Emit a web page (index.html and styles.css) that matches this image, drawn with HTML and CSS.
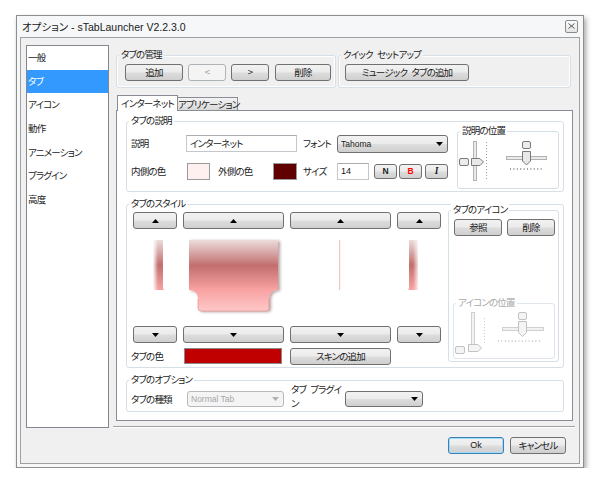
FILE: index.html
```html
<!DOCTYPE html>
<html lang="ja">
<head>
<meta charset="utf-8">
<title>オプション - sTabLauncher</title>
<link rel="stylesheet" href="styles.css">
</head>
<body>
<div class="window">
  <div class="titlebar">
    <span class="title">オプション - sTabLauncher V2.2.3.0</span>
    <span class="close"><svg width="7" height="6" viewBox="0 0 7 6"><path d="M0.5 0.5 L6.5 5.5 M6.5 0.5 L0.5 5.5" stroke="#555" stroke-width="1" fill="none"/></svg></span>
  </div>
  <div class="client">
    <div class="main">
      <ul class="list">
        <li>一般</li>
        <li class="sel">タブ</li>
        <li>アイコン</li>
        <li>動作</li>
        <li>アニメーション</li>
        <li>プラグイン</li>
        <li>高度</li>
      </ul>
      <div class="right">
        <div class="top-groups">
          <div class="group g-manage">
            <span class="legend">タブの管理</span>
            <button class="btn w58">追加</button>
            <button class="btn w38" disabled>&lt;</button>
            <button class="btn w38">&gt;</button>
            <button class="btn w56 ml1">削除</button>
          </div>
          <div class="group g-quick">
            <span class="legend">クイック セットアップ</span>
            <button class="btn w124">ミュージック タブの追加</button>
          </div>
        </div>
        <div class="tabctl">
          <div class="tabs">
            <div class="tab active">インターネット</div>
            <div class="tab">アプリケーション</div>
          </div>
          <div class="pane">
            <div class="group desc">
              <span class="legend">タブの説明</span>
              <div class="desc-left">
                <div class="row">
                  <span class="lbl w55">説明</span>
                  <span class="input w111">インターネット</span>
                  <span class="lbl w34 ml6">フォント</span>
                  <span class="combo w111 h18"><span class="latin">Tahoma</span><svg class="arr" width="7" height="4" viewBox="0 0 7 4"><polygon points="0,0 7,0 3.5,4" fill="#000"/></svg></span>
                </div>
                <div class="row r2">
                  <span class="lbl w56">内側の色</span>
                  <span class="swatch pink w23"></span>
                  <span class="lbl w55 ml8">外側の色</span>
                  <span class="swatch dark w24"></span>
                  <span class="lbl w34 ml6">サイズ</span>
                  <span class="input w32 latin">14</span>
                  <button class="btn fmt ml5 fn">N</button>
                  <button class="btn fmt ml2 fb">B</button>
                  <button class="btn fmt ml3 fi">I</button>
                </div>
              </div>
              <div class="group pos-group">
                <span class="legend">説明の位置</span>
                <svg width="100" height="56" viewBox="0 0 100 56">
                  <rect x="1.5" y="26.5" width="9" height="7" rx="1.5" fill="#ececec" stroke="#7a7a7a"/>
                  <rect x="15.5" y="9.5" width="3" height="39" fill="#eaeaea" stroke="#b2b2b2"/>
                  <path d="M13.5 26.5 H22 L25.5 30 L22 33.5 H13.5 Z" fill="#e8e8e8" stroke="#7a7a7a" stroke-linejoin="round"/>
                  <line x1="28.5" y1="10" x2="28.5" y2="48" stroke="#9a9a9a" stroke-dasharray="1 2"/>
                  <rect x="48.5" y="24.5" width="40" height="3" fill="#eaeaea" stroke="#b2b2b2"/>
                  <rect x="64.5" y="9.5" width="8" height="7" rx="1.5" fill="#ececec" stroke="#7a7a7a"/>
                  <path d="M64.5 19.5 H72.5 V29 L68.5 33 L64.5 29 Z" fill="#e8e8e8" stroke="#7a7a7a" stroke-linejoin="round"/>
                  <line x1="52" y1="37" x2="86" y2="37" stroke="#9a9a9a" stroke-width="2" stroke-dasharray="1 2.4"/>
                </svg>
              </div>
            </div>

            <div class="group style">
              <span class="legend">タブのスタイル</span>
              <div class="style-left">
                <div class="style-grid">
                  <button class="btn"><svg width="7" height="4" viewBox="0 0 7 4"><polygon points="0,4 7,4 3.5,0" fill="#000"/></svg></button>
                  <button class="btn"><svg width="7" height="4" viewBox="0 0 7 4"><polygon points="0,4 7,4 3.5,0" fill="#000"/></svg></button>
                  <button class="btn"><svg width="7" height="4" viewBox="0 0 7 4"><polygon points="0,4 7,4 3.5,0" fill="#000"/></svg></button>
                  <button class="btn"><svg width="7" height="4" viewBox="0 0 7 4"><polygon points="0,4 7,4 3.5,0" fill="#000"/></svg></button>

                  <svg class="piece" width="44" height="97" viewBox="0 0 44 97">
                    <defs>
                      <linearGradient id="gTop" x1="0" y1="0" x2="0" y2="1">
                        <stop offset="0" stop-color="#ecdcdc"/>
                        <stop offset="0.5" stop-color="#c26e6e"/>
                        <stop offset="1" stop-color="#f8a4a4"/>
                      </linearGradient>
                      <linearGradient id="gMid" x1="0" y1="0" x2="0" y2="1">
                        <stop offset="0" stop-color="#ecdcdc"/>
                        <stop offset="0.36" stop-color="#c26e6e"/>
                        <stop offset="0.7" stop-color="#f8a2a2"/>
                        <stop offset="1" stop-color="#ffc8c8"/>
                      </linearGradient>
                      <linearGradient id="fadeL" x1="0" y1="0" x2="1" y2="0">
                        <stop offset="0" stop-color="#fff" stop-opacity="0.95"/>
                        <stop offset="1" stop-color="#fff" stop-opacity="0"/>
                      </linearGradient>
                      <linearGradient id="fadeR" x1="0" y1="0" x2="1" y2="0">
                        <stop offset="0" stop-color="#fff" stop-opacity="0"/>
                        <stop offset="1" stop-color="#fff" stop-opacity="0.95"/>
                      </linearGradient>
                      <filter id="sh" x="-20%" y="-20%" width="140%" height="140%">
                        <feDropShadow dx="2" dy="1" stdDeviation="1.5" flood-color="#5a2a2a" flood-opacity="0.45"/>
                      </filter>
                    </defs>
                    <path d="M20 11 H30 V59 Q30 61 32 61 H20 Z" fill="url(#gTop)"/>
                    <rect x="20" y="11" width="5" height="50" fill="url(#fadeL)"/>
                  </svg>
                  <svg class="piece" width="101" height="97" viewBox="0 0 101 97">
                    <path d="M6 11 H95 V61 C90 61 86 64 86 70 V79 Q86 82 83 82 H18 Q15 82 15 79 V70 C15 64 11 61 6 61 Z" fill="url(#gMid)" filter="url(#sh)"/>
                    <path d="M15 70 V79 Q15 82 18 82 H83 Q86 82 86 79 V70" fill="none" stroke="#e79a9a" stroke-width="0.8"/>
                  </svg>
                  <svg class="piece" width="101" height="97" viewBox="0 0 101 97">
                    <rect x="49" y="11" width="1.2" height="50" fill="#f0c4c4"/>
                  </svg>
                  <svg class="piece" width="44" height="97" viewBox="0 0 44 97">
                    <path d="M14 11 H21 V61 H10 Q12 61 12 59 V11 Z" fill="url(#gTop)"/>
                    <rect x="16" y="11" width="6" height="50" fill="url(#fadeR)"/>
                  </svg>

                  <button class="btn"><svg width="7" height="4" viewBox="0 0 7 4"><polygon points="0,0 7,0 3.5,4" fill="#000"/></svg></button>
                  <button class="btn"><svg width="7" height="4" viewBox="0 0 7 4"><polygon points="0,0 7,0 3.5,4" fill="#000"/></svg></button>
                  <button class="btn"><svg width="7" height="4" viewBox="0 0 7 4"><polygon points="0,0 7,0 3.5,4" fill="#000"/></svg></button>
                  <button class="btn"><svg width="7" height="4" viewBox="0 0 7 4"><polygon points="0,0 7,0 3.5,4" fill="#000"/></svg></button>
                </div>
                <div class="color-row">
                  <span class="lbl w53 lh16">タブの色</span>
                  <span class="swatch red"></span>
                  <button class="btn w101 ml8">スキンの追加</button>
                </div>
              </div>
              <div class="group icon-group">
                <span class="legend">タブのアイコン</span>
                <div class="icon-btns">
                  <button class="btn w48">参照</button>
                  <button class="btn w48">削除</button>
                </div>
                <div class="group pos-group icon-pos">
                  <span class="legend">アイコンの位置</span>
                  <svg width="100" height="54" viewBox="0 0 100 54">
                    <rect x="17.5" y="8.5" width="3" height="37" fill="#f2f2f2" stroke="#d0d0d0"/>
                    <line x1="30.5" y1="14" x2="30.5" y2="41" stroke="#cfcfcf" stroke-dasharray="1 2"/>
                    <path d="M14.5 40.5 H24 L27.5 44 L24 47.5 H14.5 Z" fill="#f4f4f4" stroke="#c2c2c2" stroke-linejoin="round"/>
                    <rect x="1.5" y="42.5" width="9" height="7" rx="1.5" fill="#f4f4f4" stroke="#c2c2c2"/>
                    <rect x="48.5" y="23.5" width="41" height="3" fill="#f2f2f2" stroke="#d0d0d0"/>
                    <rect x="64.5" y="8.5" width="8" height="7" rx="1.5" fill="#f4f4f4" stroke="#c2c2c2"/>
                    <path d="M64.5 17.5 H72.5 V28.5 L68.5 32.5 L64.5 28.5 Z" fill="#f4f4f4" stroke="#c2c2c2" stroke-linejoin="round"/>
                    <line x1="44" y1="37" x2="86" y2="37" stroke="#cfcfcf" stroke-width="2" stroke-dasharray="1 2.4"/>
                  </svg>
                </div>
              </div>
            </div>

            <div class="group opts">
              <span class="legend">タブのオプション</span>
              <span class="lbl w56 lh16 mt9">タブの種類</span>
              <span class="combo disabled w97 mt9"><span class="latin">Normal Tab</span><svg class="arr" width="7" height="4" viewBox="0 0 7 4"><polygon points="0,0 7,0 3.5,4" fill="#b0b0b0"/></svg></span>
              <span class="lbl plug">タブ プラグイ<br>ン</span>
              <span class="combo w78 mt9 ml1"><svg class="arr" width="7" height="4" viewBox="0 0 7 4"><polygon points="0,0 7,0 3.5,4" fill="#000"/></svg></span>
            </div>
          </div>
        </div>
        <div class="sep"></div>
      </div>
    </div>
    <div class="footer">
      <button class="btn ok w56"><span class="latin">Ok</span></button>
      <button class="btn w56">キャンセル</button>
    </div>
  </div>
</div>
</body>
</html>
```

FILE: styles.css
```css
* { box-sizing: border-box; }
html, body { margin: 0; padding: 0; }
body {
  background: #fff;
  font-family: "Noto Sans CJK JP", "Noto Sans", sans-serif;
  font-size: 9.5px;
  letter-spacing: -0.8px;
  word-spacing: 3px;
  font-feature-settings: "palt" 1;
  color: #1a1a1a;
}
.latin { font-family: "Liberation Sans", "Noto Sans CJK JP", sans-serif; font-size: 8.5px; letter-spacing: 0; word-spacing: 0; }
.window {
  margin: 15px 0 0 16px;
  width: 568px;
  height: 453px;
  border: 1px solid #8e8e8e;
  background: #f6f7f8;
  padding: 0 3px 3px;
  box-shadow: 2px 3px 5px rgba(0,0,0,.35);
  display: flex;
  flex-direction: column;
}
.titlebar {
  height: 21px;
  display: flex;
  align-items: center;
  justify-content: space-between;
  padding: 0 2px 1px 2px;
}
.title { font-family: "Liberation Sans", "Noto Sans CJK JP", sans-serif; font-size: 10.5px; letter-spacing: 0; word-spacing: 0; color: #1a1a1a; }
.close {
  width: 13px; height: 13px;
  border: 1px solid #8b8b8b;
  border-radius: 2px;
  background: linear-gradient(#fdfdfd, #e4e4e4);
  display: flex; align-items: center; justify-content: center;
}
.close svg { display: block; }
.client {
  flex: 1;
  border: 1px solid #a0a0a0;
  background: #f0f0f0;
  display: flex;
  flex-direction: column;
}
.main { display: flex; height: 390px; }
.list {
  list-style: none;
  margin: 7px 0 0 5px;
  padding: 0;
  width: 83px;
  height: 383px;
  border: 1px solid #828790;
  background: #fff;
}
.list li { height: 23.7px; line-height: 23.7px; padding-left: 1px; }
.list li.sel { background: #3399ff; color: #fff; }

.right { width: 462px; margin-left: 4px; display: flex; flex-direction: column; }
.top-groups { display: flex; gap: 2px; margin: 17px 0 0 3px; }

.group {
  position: relative;
  border: 1px solid #d5dfe5;
  border-radius: 3px;
  box-shadow: inset 0 0 0 1px #fff;
}
.legend {
  position: absolute;
  top: -8px;
  left: 2px;
  padding: 0 2px;
  line-height: 13px;
  background: #f0f0f0;
  white-space: nowrap;
}
.pane .legend { background: #fff; }

.g-manage { width: 220px; height: 33px; display: flex; align-items: flex-start; gap: 5px; padding: 8px 0 0 8px; }
.g-quick { width: 233px; height: 33px; padding: 8px 0 0 6px; }

.btn {
  height: 17px;
  padding: 0;
  border: 1px solid #707070;
  border-radius: 3px;
  background: linear-gradient(#f2f2f2 0%, #ebebeb 48%, #dddddd 52%, #cfcfcf 100%);
  font: inherit;
  letter-spacing: inherit;
  word-spacing: inherit;
  color: #1a1a1a;
  display: flex;
  align-items: center;
  justify-content: center;
  line-height: 1;
}
.btn:disabled { border-color: #adb2b5; background: #f4f4f4; color: #9a9a9a; }
.btn svg { display: block; }
.ok { border-color: #3c7fb1; box-shadow: inset 0 0 0 1px #9fdcf9; }
.ok .latin { font-size: 9px; }

.w23 { width: 23px; } .w24 { width: 24px; } .w32 { width: 32px; } .w34 { width: 34px; }
.w38 { width: 38px; } .w48 { width: 48px; } .w53 { width: 53px; } .w55 { width: 55px; }
.w56 { width: 56px; } .w58 { width: 58px; } .w78 { width: 78px; } .w97 { width: 97px; }
.w101 { width: 101px; } .w111 { width: 111px; } .w124 { width: 124px; }
.ml1 { margin-left: 1px; } .ml2 { margin-left: 2px; } .ml3 { margin-left: 3px; } .ml5 { margin-left: 5px; }
.ml6 { margin-left: 6px; } .ml8 { margin-left: 8px; } .mt9 { margin-top: 9px; }
.h18 { height: 18px !important; }
.lh16 { line-height: 16px; }

.tabctl { margin: 7px 0 0 3px; width: 457px; }
.tabs { display: flex; align-items: flex-end; height: 15px; padding-left: 1px; }
.tab {
  height: 13px;
  width: 60px;
  border: 1px solid #898c95;
  border-bottom: none;
  border-left: none;
  background: linear-gradient(#f3f3f3, #e6e6e6 50%, #d9d9d9);
  line-height: 12px;
  text-align: center;
  white-space: nowrap;
}
.tab.active {
  height: 16px;
  width: 61px;
  margin-bottom: -1px;
  border-left: 1px solid #898c95;
  background: #fff;
  line-height: 14px;
  position: relative;
  z-index: 1;
}
.pane {
  height: 311px;
  border: 1px solid #898c95;
  background: #fff;
  padding: 10px 8px 8px 9px;
  display: flex;
  flex-direction: column;
  gap: 12px;
}

.desc { height: 71px; display: flex; }
.desc-left { flex: 1; padding: 13px 0 0 4px; }
.row { display: flex; align-items: flex-start; }
.r2 { margin-top: 10px; }
.lbl { line-height: 17px; white-space: nowrap; }
.input {
  height: 17px;
  border: 1px solid #c4c8cd;
  border-top-color: #abadb3;
  background: #fff;
  padding: 0 3px;
  line-height: 15px;
  white-space: nowrap;
}
.input.latin { font-size: 9px; }
.combo {
  height: 16px;
  border: 1px solid #707070;
  border-radius: 3px;
  background: linear-gradient(#f2f2f2 0%, #ebebeb 48%, #dddddd 52%, #cfcfcf 100%);
  display: flex;
  align-items: center;
  padding: 0 4px 0 3px;
  white-space: nowrap;
}
.combo.disabled { border-color: #b6b9bc; background: #f4f4f4; color: #a6a6a6; }
.arr { display: block; flex: none; margin-left: auto; }
.swatch { height: 17px; border: 1px solid #9a9a9a; }
.swatch.pink { background: #fff0f0; }
.swatch.dark { background: #600000; }
.swatch.red { width: 98px; height: 16px; background: #c00000; border-color: #8a8a8a; }
.fmt { width: 23px; height: 15px; margin-top: 1px; font-size: 8.5px; font-weight: bold; font-family: "Liberation Sans", sans-serif; letter-spacing: 0; }
.fn { color: #222; }
.fb { color: #ff0000; }
.fi { font-family: "Liberation Serif", serif; font-style: italic; font-size: 9.5px; }

.pos-group { width: 102px; height: 58px; margin: 9px 4px 0 0; flex: none; }
.pos-group svg { display: block; }

.style { height: 164px; display: flex; }
.style-left { padding: 7px 0 0 4px; }
.style-grid {
  display: grid;
  grid-template-columns: 44px 101px 101px 44px;
  grid-template-rows: 17px 97px 17px;
  column-gap: 6px;
  margin-left: 2px;
}
.piece { display: block; }
.color-row { display: flex; align-items: flex-start; margin-top: 5px; }
.icon-group { width: 111px; height: 152px; margin: 5px 4px 0 7px; display: flex; flex-direction: column; }
.icon-btns { display: flex; gap: 5px; padding: 8px 0 0 5px; }
.icon-pos { height: 56px; margin: auto 0 2px 4px; border-color: #dfe5ea; }
.icon-pos .legend { color: #a8a8a8; }

.opts { height: 32px; display: flex; align-items: flex-start; padding: 1px 0 0 4px; }
.plug { line-height: 14px; width: 53px; margin-left: 7px; }

.sep { height: 2px; margin-top: 5px; border-top: 1px solid #a0a0a0; border-bottom: 1px solid #fff; }
.footer { display: flex; justify-content: flex-end; gap: 6px; padding: 9px 13px 0 0; }
```
